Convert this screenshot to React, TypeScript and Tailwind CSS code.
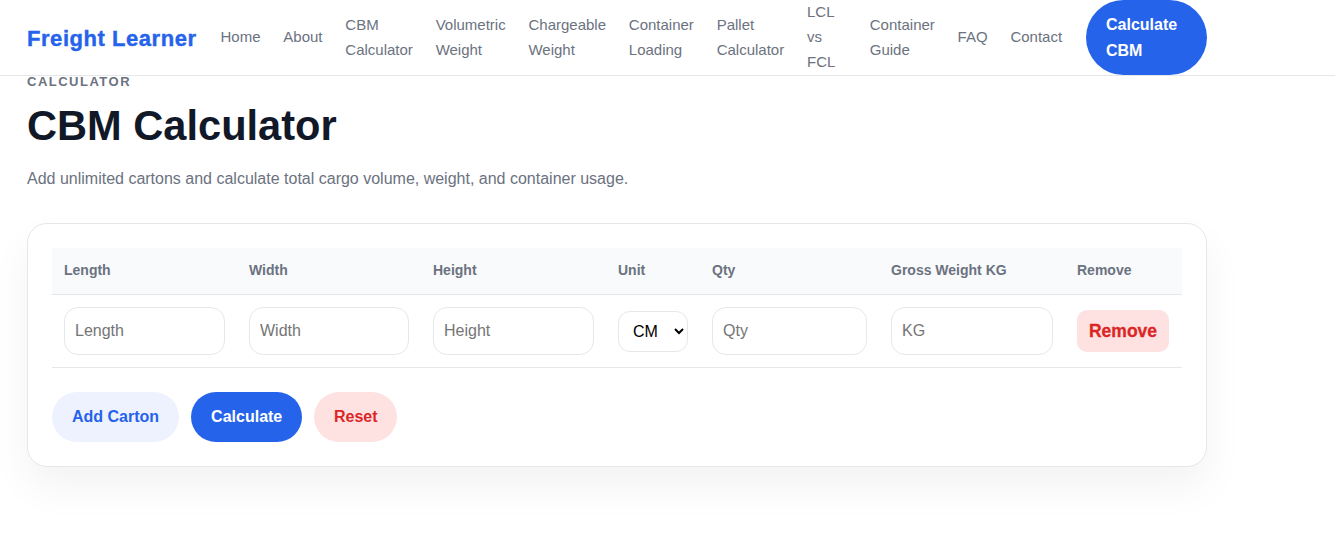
const NAV_LINKS = [
  { label: "Home", width: "w-min" },
  { label: "About", width: "w-min" },
  { label: "CBM Calculator", width: "w-min" },
  { label: "Volumetric Weight", width: "w-min" },
  { label: "Chargeable Weight", width: "w-min" },
  { label: "Container Loading", width: "w-min" },
  { label: "Pallet Calculator", width: "w-min" },
  { label: "LCL vs FCL", width: "w-[40px]" },
  { label: "Container Guide", width: "w-min" },
  { label: "FAQ", width: "w-min" },
  { label: "Contact", width: "w-min" },
];

const COLUMNS = [
  { label: "Length", width: "w-[185px]" },
  { label: "Width", width: "w-[184px]" },
  { label: "Height", width: "w-[185px]" },
  { label: "Unit", width: "w-[94px]" },
  { label: "Qty", width: "w-[179px]" },
  { label: "Gross Weight KG", width: "w-[186px]" },
  { label: "Remove", width: "w-[117px]" },
];

function Field({ placeholder }: { placeholder: string }) {
  return (
    <input
      placeholder={placeholder}
      className="block h-12 w-full rounded-[14px] border border-[#e5e7eb] bg-white px-2.5 text-base text-black outline-none placeholder:text-[#757575]"
    />
  );
}

export default function App() {
  return (
    <div className="min-h-[537px] bg-white font-['Liberation_Sans',Arial,sans-serif] leading-[1.65] text-[#111827]">
      {/* Header */}
      <header className="border-b border-[#e5e7eb]">
        <nav className="ml-[27px] flex w-[1180px] items-center justify-between">
          <a className="pt-[3px] text-[22px] leading-none font-bold tracking-[0.55px] text-[#2563eb] [-webkit-text-stroke:0.4px_#2563eb]">
            Freight Learner
          </a>
          <ul className="-mt-0.5 flex items-center gap-[22.8px] text-[15px] leading-[25px] text-[#6b7280]">
            {NAV_LINKS.map((link) => (
              <li key={link.label} className={link.width}>
                {link.label}
              </li>
            ))}
          </ul>
          <a className="h-[75px] w-[121px] rounded-full bg-[#2563eb] px-5 pt-3 text-base leading-[26px] font-bold text-white">
            Calculate CBM
          </a>
        </nav>
      </header>

      <main className="ml-[27px] w-[1180px]">
        <p className="text-[13px] leading-[11px] font-bold tracking-[1.5px] text-[#6b7280]">CALCULATOR</p>
        <h1 className="mt-3 text-[41.6px] leading-[53px] font-bold">CBM Calculator</h1>
        <p className="mt-[15px] text-base text-[#6b7280]">
          Add unlimited cartons and calculate total cargo volume, weight, and container usage.
        </p>

        {/* Calculator card */}
        <section className="mt-8 rounded-[20px] border border-[#e5e7eb] bg-white p-6 shadow-[0_20px_40px_rgba(0,0,0,0.05)]">
          <table className="w-[1130px] table-fixed border-collapse">
            <thead>
              <tr className="border-b border-[#e5e7eb] bg-[#f9fafb]">
                {COLUMNS.map((col) => (
                  <th
                    key={col.label}
                    className={`${col.width} px-3 pt-[11px] pb-[13px] text-left text-sm leading-[22px] font-bold text-[#6b7280]`}
                  >
                    {col.label}
                  </th>
                ))}
              </tr>
            </thead>
            <tbody>
              <tr className="border-b border-[#e5e7eb]">
                <td className="p-3">
                  <Field placeholder="Length" />
                </td>
                <td className="p-3">
                  <Field placeholder="Width" />
                </td>
                <td className="p-3">
                  <Field placeholder="Height" />
                </td>
                <td className="p-3">
                  <select className="h-[41px] w-[70px] appearance-auto rounded-[12px] border border-[#e5e7eb] bg-white px-2.5 text-base text-black">
                    <option>CM</option>
                  </select>
                </td>
                <td className="p-3">
                  <Field placeholder="Qty" />
                </td>
                <td className="p-3">
                  <Field placeholder="KG" />
                </td>
                <td className="p-3">
                  <button className="h-[42px] w-[92px] rounded-[10px] bg-[#fee2e2] text-[17.5px] font-bold text-[#dc2626] [-webkit-text-stroke:0.3px_#dc2626]">
                    Remove
                  </button>
                </td>
              </tr>
            </tbody>
          </table>

          <div className="mt-6 flex gap-3">
            <button className="h-[50px] rounded-full bg-[#eef2ff] px-5 text-base font-bold text-[#2563eb]">
              Add Carton
            </button>
            <button className="h-[50px] rounded-full bg-[#2563eb] px-5 text-base font-bold text-white">
              Calculate
            </button>
            <button className="h-[50px] w-[83px] rounded-full bg-[#fee2e2] text-base font-bold text-[#dc2626]">
              Reset
            </button>
          </div>
        </section>
      </main>
    </div>
  );
}
